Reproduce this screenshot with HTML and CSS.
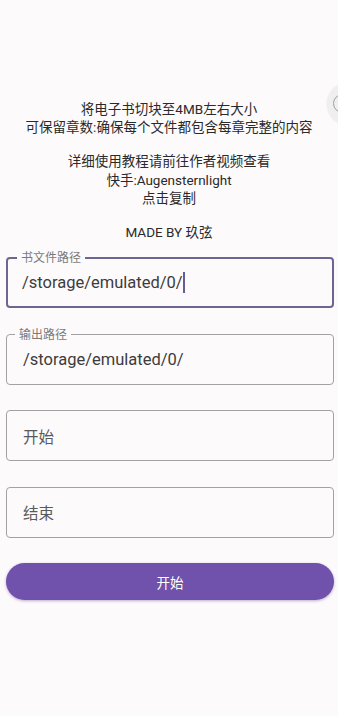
FILE: index.html
```html
<!DOCTYPE html>
<html lang="zh">
<head>
<meta charset="utf-8">
<title>切块</title>
<link rel="stylesheet" href="styles.css">
</head>
<body>
<div class="screen">
  <div class="float-ball"><span class="float-ring"></span></div>
  <div class="intro">
    <p class="para">将电子书切块至4MB左右大小<br>可保留章数:确保每个文件都包含每章完整的内容</p>
    <p class="para gap">详细使用教程请前往作者视频查看<br>快手:Augensternlight<br>点击复制</p>
    <p class="para gap">MADE BY 玖弦</p>
  </div>
  <div class="form">
    <div class="field focused">
      <span class="label">书文件路径</span>
      <span class="value">/storage/emulated/0/</span><span class="cursor"></span>
    </div>
    <div class="field">
      <span class="label">输出路径</span>
      <span class="value">/storage/emulated/0/</span>
    </div>
    <div class="field">
      <span class="placeholder">开始</span>
    </div>
    <div class="field">
      <span class="placeholder">结束</span>
    </div>
    <div class="button">开始</div>
  </div>
</div>
</body>
</html>
```
FILE: styles.css
```css
html, body {
  margin: 0;
  padding: 0;
  background: #fdfafc;
  overflow: hidden;
}
.screen {
  position: relative;
  width: 338px;
  height: 716px;
  overflow: hidden;
  font-family: Roboto, "Noto Sans CJK SC", sans-serif;
  color: #2a2a2a;
}
.float-ball {
  position: absolute;
  left: 327px;
  top: 82px;
  width: 44px;
  height: 44px;
  border-radius: 50%;
  background: #efefef;
  box-shadow: 0 0 2px rgba(0,0,0,0.08);
}
.float-ring {
  position: absolute;
  left: 6px;
  top: 12px;
  width: 17px;
  height: 17px;
  border-radius: 50%;
  border: 1.5px solid #a0a0a0;
}
.intro {
  padding-top: 100px;
  text-align: center;
}
.para {
  margin: 0;
  font-size: 13.5px;
  line-height: 18.3px;
}
.para.gap {
  margin-top: 15.7px;
}
.form {
  margin-top: 16px;
  margin-left: 6px;
  width: 328px;
  display: flex;
  flex-direction: column;
  gap: 25.5px;
}
.field {
  position: relative;
  box-sizing: border-box;
  height: 51px;
  border: 1px solid #a4a1a4;
  border-radius: 4px;
  display: flex;
  align-items: center;
  padding-left: 16px;
}
.field.focused {
  border: 2px solid #6c6790;
  padding-left: 14px;
}
.label {
  position: absolute;
  top: -8px;
  left: 8px;
  padding: 0 4px;
  background: #fdfafc;
  font-size: 12px;
  line-height: 16px;
  color: #7a7a7a;
}
.field.focused .label {
  top: -9px;
  left: 9px;
}
.value {
  font-size: 16.5px;
  color: #3c3c3c;
}
.cursor {
  display: inline-block;
  width: 2px;
  height: 21px;
  background: #655c93;
}
.placeholder {
  font-size: 15.5px;
  color: #5a5a5a;
}
.button {
  height: 37px;
  border-radius: 19px;
  background: #7051ab;
  color: #ffffff;
  font-size: 13.5px;
  display: flex;
  align-items: center;
  justify-content: center;
  box-shadow: 0 1px 3px rgba(60, 30, 110, 0.35);
}
```
